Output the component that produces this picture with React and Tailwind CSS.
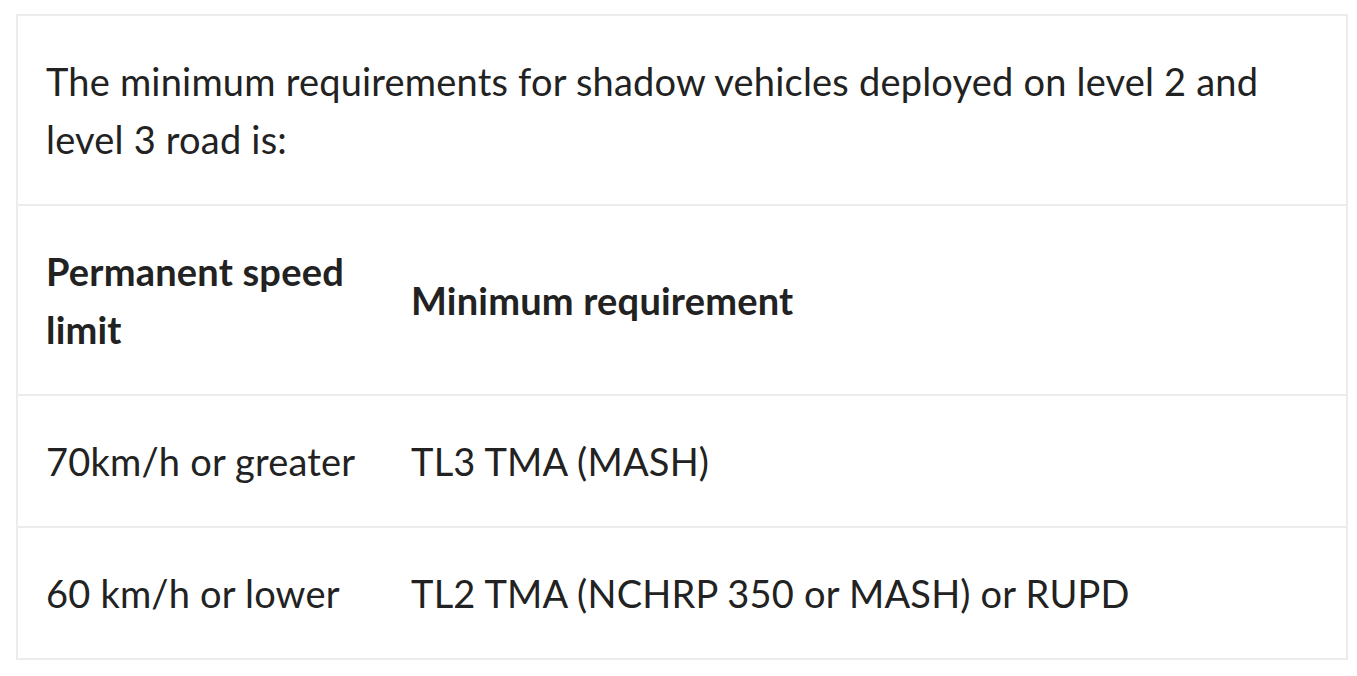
export default function App() {
  const font = { fontFamily: "Lato, 'Noto Sans', sans-serif" };
  return (
    <div className="min-h-screen bg-white pt-[14px] pl-[16px]" style={font}>
      <table className="w-[1332px] border-collapse border-2 border-[#ececec] text-[38px] leading-[58px] tracking-[0.2px] text-[#222222]">
        <tbody>
          <tr className="border-b-2 border-[#ececec]">
            <td colSpan={2} className="pl-[28px] pr-[60px] py-[36px]">
              The minimum requirements for shadow vehicles deployed on level 2 and level 3 road is:
            </td>
          </tr>
          <tr className="border-b-2 border-[#ececec] font-bold">
            <td className="w-[367px] pl-[28px] pr-[20px] py-[36px]">Permanent speed limit</td>
            <td className="pl-[27px] py-[36px]">Minimum requirement</td>
          </tr>
          <tr className="border-b-2 border-[#ececec]">
            <td className="pl-[28px] py-[36px]">70km/h or greater</td>
            <td className="pl-[27px] py-[36px]">TL3 TMA (MASH)</td>
          </tr>
          <tr>
            <td className="pl-[28px] py-[36px]">60 km/h or lower</td>
            <td className="pl-[27px] py-[36px]">TL2 TMA (NCHRP 350 or MASH) or RUPD</td>
          </tr>
        </tbody>
      </table>
    </div>
  );
}
